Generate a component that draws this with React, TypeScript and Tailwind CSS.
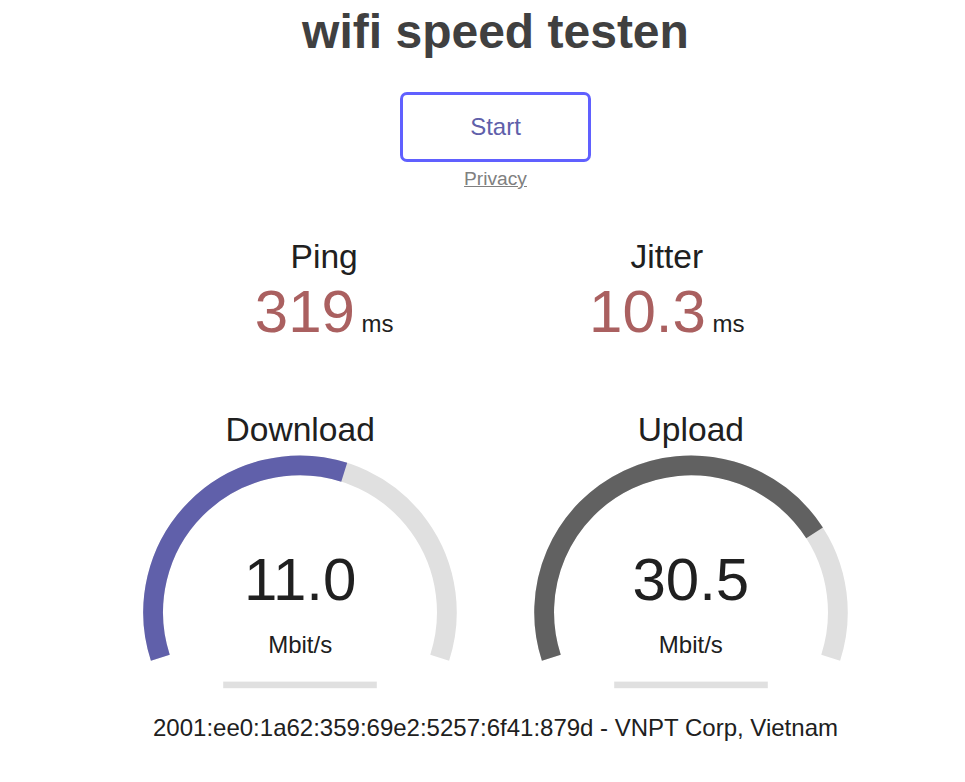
import React from 'react'

// gauge geometry copied from the canvas meter (300px tall area)
const W = 384
const H = 300
const S = H * 0.0055
const LINE = 12 * S
const CX = W / 2
const CY = H - 58 * S
const R = H / 1.8 - LINE

function arcPath(from: number, to: number) {
  const x1 = CX + R * Math.cos(from)
  const y1 = CY + R * Math.sin(from)
  const x2 = CX + R * Math.cos(to)
  const y2 = CY + R * Math.sin(to)
  const large = to - from > Math.PI ? 1 : 0
  return `M ${x1} ${y1} A ${R} ${R} 0 ${large} 1 ${x2} ${y2}`
}

function mbpsToAmount(s: number) {
  return 1 - 1 / Math.pow(1.3, Math.sqrt(s))
}

function Gauge({ name, value, color }: { name: string; value: string; color: string }) {
  const amount = mbpsToAmount(parseFloat(value))
  const start = -Math.PI * 1.1
  const end = amount * Math.PI * 1.2 - Math.PI * 1.1
  return (
    <div className="relative w-[384px] h-[300px] shrink-0">
      <svg className="absolute inset-0" width={W} height={H} viewBox={`0 0 ${W} ${H}`}>
        <path d={arcPath(start, Math.PI * 0.1)} fill="none" stroke="#E0E0E0" strokeWidth={LINE} />
        <path d={arcPath(start, end)} fill="none" stroke={color} strokeWidth={LINE} />
        <rect x={W * 0.3} y={H - 16 * S} width={W * 0.4} height={4 * S} fill="#E0E0E0" />
      </svg>
      <div className="absolute top-[3.4px] left-0 w-full text-[33.6px] leading-[38.6px]">{name}</div>
      <div className="absolute bottom-[94px] left-0 w-full text-[60px] leading-[69px]">{value}</div>
      <div className="absolute bottom-[49px] left-0 w-full text-[24px] leading-[27.6px]">Mbit/s</div>
    </div>
  )
}

function SmallMeter({ name, value }: { name: string; value: string }) {
  return (
    <div className="w-[336px] h-[170px] shrink-0 text-center">
      <div className="text-[33.6px] leading-[38.6px]">{name}</div>
      <div className="text-[24px] leading-[27.6px]">
        <span className="inline-block text-[60px] leading-[69px] text-[#AA6060]">{value}</span>{' '}
        <span className="inline-block">ms</span>
      </div>
    </div>
  )
}

export default function App() {
  return (
    <div className="w-full min-h-[782px] overflow-hidden bg-white">
      <div
        className="w-[991px] text-center text-[24px] text-[#202020]"
        style={{ fontFamily: '"Liberation Sans", Arial, sans-serif' }}
      >
        <h1 className="pt-[4px] mb-[33px] text-[48px] leading-[55px] font-bold text-[#404040]">
          wifi speed testen
        </h1>

        <div className="mx-auto w-[191px] h-[70px] flex items-center justify-center pb-[1px] border-[3.5px] border-[#6060FF] rounded-[7px] text-[#6060AA] cursor-pointer">
          Start
        </div>
        <div className="mt-[1px] h-[28px] leading-[28px]">
          <a href="#" className="text-[19.2px] text-[#808080] underline">
            Privacy
          </a>
        </div>

        <div className="mt-[47px]">
          <div className="flex justify-center gap-[6.7px]">
            <SmallMeter name="Ping" value="319" />
            <SmallMeter name="Jitter" value="10.3" />
          </div>
          <div className="flex justify-center gap-[6.7px]">
            <Gauge name="Download" value="11.0" color="#6060AA" />
            <Gauge name="Upload" value="30.5" color="#616161" />
          </div>
          <div className="mt-[6px] leading-[27.6px]">
            2001:ee0:1a62:359:69e2:5257:6f41:879d - VNPT Corp, Vietnam
          </div>
        </div>
      </div>
    </div>
  )
}
